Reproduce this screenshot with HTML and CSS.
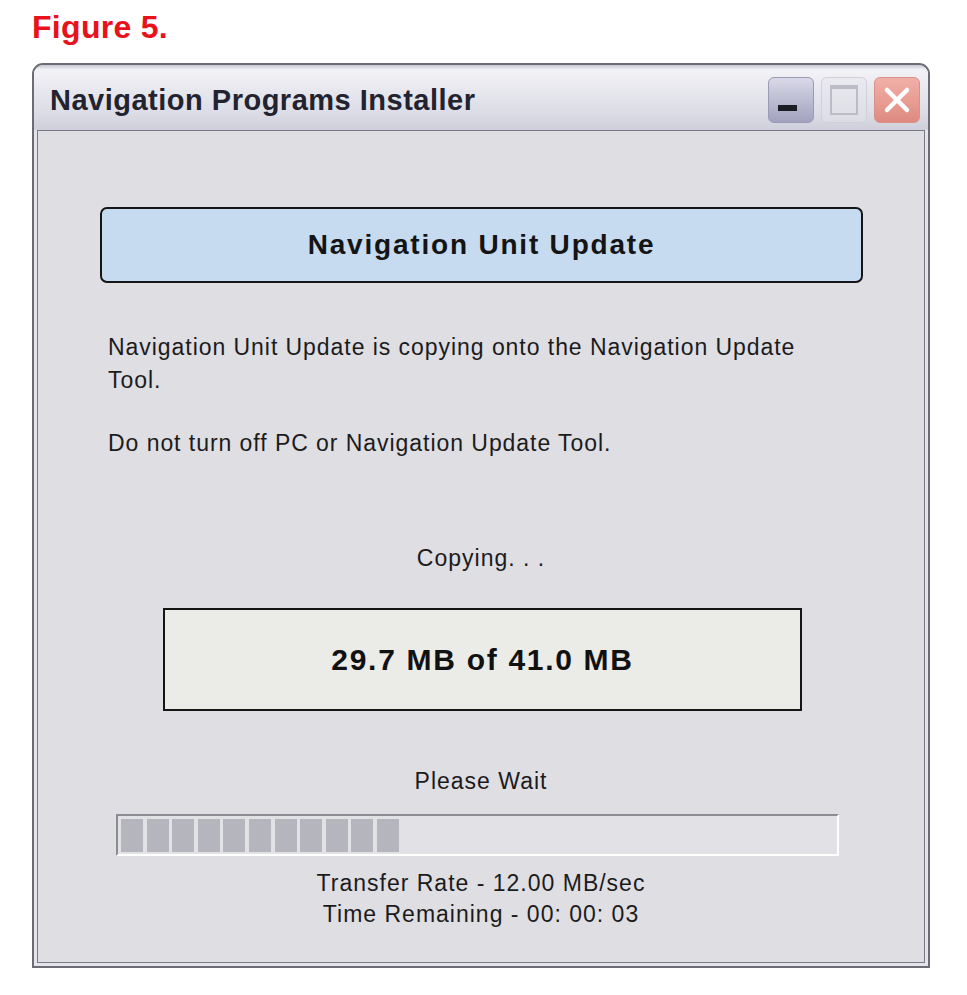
FILE: index.html
```html
<!DOCTYPE html>
<html>
<head>
<meta charset="utf-8">
<link rel="stylesheet" href="styles.css">
</head>
<body>
<h1 class="figure">Figure 5.</h1>
<div class="window">
  <div class="titlebar">
    <span class="title">Navigation Programs Installer</span>
    <div class="controls">
      <div class="btn btn-min"><span class="dash"></span></div>
      <div class="btn btn-max"><span class="sq"></span></div>
      <div class="btn btn-close">
        <svg width="30" height="30" viewBox="0 0 30 30"><path d="M5 5 L25 25 M25 5 L5 25" stroke="#fff" stroke-width="4.5" stroke-linecap="round"/></svg>
      </div>
    </div>
  </div>
  <div class="client">
    <div class="banner">Navigation Unit Update</div>
    <p class="msg">Navigation Unit Update is copying onto the Navigation Update<br>Tool.</p>
    <p class="msg msg2">Do not turn off PC or Navigation Update Tool.</p>
    <div class="status">Copying. . .</div>
    <div class="amount">29.7 MB of 41.0 MB</div>
    <div class="status wait">Please Wait</div>
    <div class="progress">
      <span class="seg"></span><span class="seg"></span><span class="seg"></span><span class="seg"></span><span class="seg"></span><span class="seg"></span><span class="seg"></span><span class="seg"></span><span class="seg"></span><span class="seg"></span><span class="seg"></span>
    </div>
    <div class="info">
      <div>Transfer Rate - 12.00 MB/sec</div>
      <div>Time Remaining - 00: 00: 03</div>
    </div>
  </div>
</div>
</body>
</html>
```
FILE: styles.css
```css
html, body {
  margin: 0;
  padding: 0;
  background: #ffffff;
}
body {
  font-family: "Liberation Sans", Arial, sans-serif;
  color: #1b1b1b;
}
.figure {
  margin: 0;
  padding: 9px 0 0 32px;
  height: 36px;
  line-height: 36px;
  font-size: 32px;
  font-weight: bold;
  color: #e8121d;
  letter-spacing: 0.3px;
}
.window {
  margin: 18px 0 0 32px;
  width: 898px;
  height: 905px;
  box-sizing: border-box;
  border: 2px solid #6c6c74;
  border-radius: 11px 11px 0 0;
  background: #e4e4ec;
  padding: 0 3px 3px 3px;
  display: flex;
  flex-direction: column;
}
.titlebar {
  height: 65px;
  margin: 0 -3px;
  padding: 12px 8px 0 16px;
  box-sizing: border-box;
  border-radius: 9px 9px 0 0;
  background: linear-gradient(#c9c9d6 0px, #f3f3f7 5px, #eaeaf0 30%, #dcdce6 75%, #cfcfdb 100%);
  display: flex;
  justify-content: space-between;
  align-items: flex-start;
}
.title {
  font-size: 29px;
  font-weight: bold;
  color: #23232f;
  line-height: 46px;
  letter-spacing: 0.5px;
}
.controls {
  display: flex;
  gap: 7px;
}
.btn {
  width: 46px;
  height: 46px;
  box-sizing: border-box;
  border-radius: 6px;
  display: flex;
  align-items: center;
  justify-content: center;
}
.btn-min {
  background: linear-gradient(#d9d9e8, #b7b7cf 60%, #a2a2bf);
  border: 1px solid #9a9ab4;
}
.dash {
  width: 19px;
  height: 6px;
  background: #1d1d24;
  margin-top: 16px;
  margin-right: 8px;
}
.btn-max {
  background: linear-gradient(#eaeaf0, #dcdce4);
  border: 1px solid #d0d0da;
}
.sq {
  width: 24px;
  height: 24px;
  border: 2px solid #bcbcc6;
  border-top-width: 4px;
}
.btn-close {
  background: linear-gradient(#f0b0a8, #e79a90 60%, #dd8a80);
  border: 1px solid #d89088;
}
.client {
  flex: 1;
  border: 1px solid #7a7a84;
  background: #dfdee3;
  padding-top: 76px;
  display: flex;
  flex-direction: column;
}
.banner {
  margin: 0 61px 0 62px;
  height: 76px;
  box-sizing: border-box;
  border: 2px solid #151515;
  border-radius: 7px;
  background: #c6daf0;
  display: flex;
  align-items: center;
  justify-content: center;
  font-size: 28px;
  font-weight: bold;
  color: #141414;
  letter-spacing: 1.8px;
}
.msg {
  margin: 48px 0 0 70px;
  font-size: 23px;
  line-height: 33px;
  letter-spacing: 0.95px;
}
.msg2 {
  margin-top: 30px;
}
.status {
  margin-top: 82px;
  text-align: center;
  font-size: 23px;
  line-height: 33px;
  letter-spacing: 1px;
}
.amount {
  margin: 33px 0 0 125px;
  width: 639px;
  height: 103px;
  box-sizing: border-box;
  border: 2px solid #151515;
  background: #ebebe7;
  display: flex;
  align-items: center;
  justify-content: center;
  font-size: 30px;
  font-weight: bold;
  letter-spacing: 1.7px;
  color: #111;
}
.wait {
  margin-top: 54px;
}
.progress {
  margin: 16px 0 0 78px;
  width: 723px;
  height: 42px;
  box-sizing: border-box;
  border-top: 2px solid #8c8c94;
  border-left: 2px solid #8c8c94;
  border-bottom: 2px solid #ffffff;
  border-right: 2px solid #ffffff;
  background: #e2e2e6;
  padding: 3px 3px 2px 3px;
  display: flex;
  gap: 3.6px;
}
.seg {
  width: 22px;
  background: #b5b5be;
}
.info {
  margin-top: 12px;
  text-align: center;
  font-size: 23px;
  line-height: 31px;
  letter-spacing: 1px;
}
```
